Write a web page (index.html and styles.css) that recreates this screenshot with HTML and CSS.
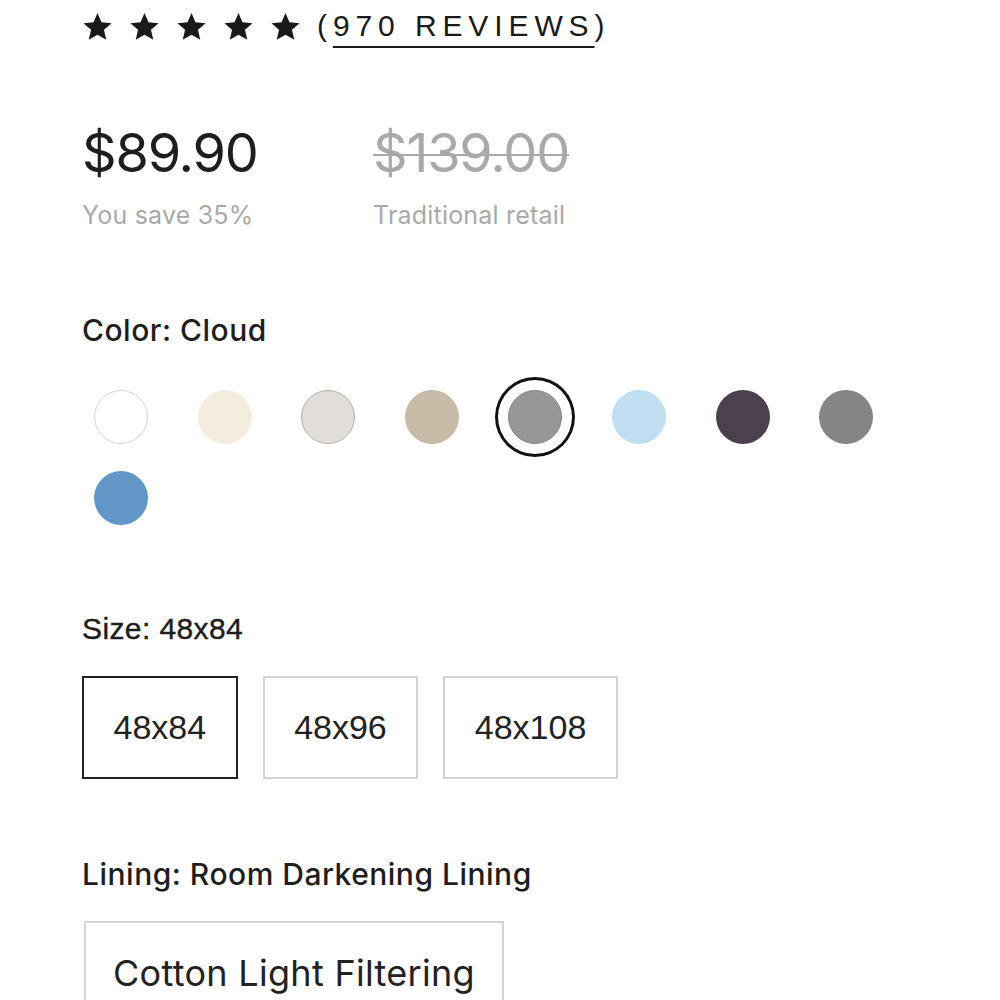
FILE: index.html
```html
<!DOCTYPE html>
<html lang="en">
<head>
<meta charset="UTF-8" />
<meta name="viewport" content="width=device-width, initial-scale=1" />
<title>Curtain Panel</title>
<link rel="stylesheet" href="styles.css">
</head>
<body>
  <div class="product" role="main">
    <div class="rating">
      <div class="stars" aria-label="5 out of 5 stars">
        <svg viewBox="0 0 24 24"><path d="M12 1.5l3.1 7.2 7.8.7-5.9 5.2 1.8 7.7L12 18.3l-6.8 4 1.8-7.7-5.9-5.2 7.8-.7z"/></svg>
        <svg viewBox="0 0 24 24"><path d="M12 1.5l3.1 7.2 7.8.7-5.9 5.2 1.8 7.7L12 18.3l-6.8 4 1.8-7.7-5.9-5.2 7.8-.7z"/></svg>
        <svg viewBox="0 0 24 24"><path d="M12 1.5l3.1 7.2 7.8.7-5.9 5.2 1.8 7.7L12 18.3l-6.8 4 1.8-7.7-5.9-5.2 7.8-.7z"/></svg>
        <svg viewBox="0 0 24 24"><path d="M12 1.5l3.1 7.2 7.8.7-5.9 5.2 1.8 7.7L12 18.3l-6.8 4 1.8-7.7-5.9-5.2 7.8-.7z"/></svg>
        <svg viewBox="0 0 24 24"><path d="M12 1.5l3.1 7.2 7.8.7-5.9 5.2 1.8 7.7L12 18.3l-6.8 4 1.8-7.7-5.9-5.2 7.8-.7z"/></svg>
      </div>
      <span class="reviews">(<a href="#reviews">970 REVIEWS</a>)</span>
    </div>

    <div class="prices">
      <div class="price">
        <div class="amount">$89.90</div>
        <div class="note">You save 35%</div>
      </div>
      <div class="price old">
        <div class="amount">$139.00</div>
        <div class="note">Traditional retail</div>
      </div>
    </div>

    <section class="option">
      <h3>Color: Cloud</h3>
      <div class="swatches">
        <button class="swatch" style="background:#ffffff;border-color:#d4d4d4" aria-label="White"></button>
        <button class="swatch" style="background:#f4eddd" aria-label="Ivory"></button>
        <button class="swatch" style="background:#e1ddd9;border-color:#b3afab" aria-label="Fog"></button>
        <button class="swatch" style="background:#c7baa7" aria-label="Sand"></button>
        <button class="swatch selected" style="background:#979795;border-color:#868684" aria-label="Cloud"></button>
        <button class="swatch" style="background:#c0ddf2" aria-label="Sky"></button>
        <button class="swatch" style="background:#4b404d" aria-label="Plum"></button>
        <button class="swatch" style="background:#858585" aria-label="Slate"></button>
        <button class="swatch" style="background:#6196c7" aria-label="Blue"></button>
      </div>
    </section>

    <section class="option size-option">
      <h3>Size: 48x84</h3>
      <div class="choices">
        <button class="choice size active">48x84</button>
        <button class="choice size">48x96</button>
        <button class="choice size">48x108</button>
      </div>
    </section>

    <section class="option lining-option">
      <h3>Lining: Room Darkening Lining</h3>
      <div class="choices">
        <button class="choice wide">Cotton Light Filtering</button>
      </div>
    </section>
  </div>
</body>
</html>
```

FILE: styles.css
```css
*, *::before, *::after {
  box-sizing: border-box;
}
body {
  margin: 0;
  background: #fff;
  color: #1e1e1e;
  font-family: 'Inter', 'Liberation Sans', Arial, sans-serif;
  font-feature-settings: "calt" 0;
}
.product {
  padding: 8px 0 0 82px;
}

/* rating */
.rating {
  display: flex;
  align-items: center;
  height: 36px;
}
.stars {
  display: flex;
  gap: 16px;
}
.stars svg {
  width: 31px;
  height: 31px;
  fill: #1a1a1a;
}
.reviews {
  margin-left: 16px;
  font-family: 'Liberation Sans', Arial, sans-serif;
  font-size: 30px;
  letter-spacing: 5.9px;
  color: #1a1a1a;
}
.reviews a {
  color: inherit;
  text-decoration: underline;
  text-decoration-thickness: 2px;
  text-underline-offset: 10px;
}

/* prices */
.prices {
  display: flex;
  margin-top: 79px;
}
.price {
  width: 291px;
}
.amount {
  font-size: 54px;
  line-height: 60px;
  letter-spacing: -1.2px;
  color: #1e1e1e;
}
.note {
  margin-top: 17px;
  font-size: 25px;
  letter-spacing: 0.2px;
  color: #a9a9a9;
}
.old .amount {
  color: #a9a9a9;
  text-decoration: line-through;
  text-decoration-thickness: 2px;
}

/* options */
.option {
  margin-top: 82px;
}
.option h3 {
  margin: 0;
  font-size: 30px;
  font-weight: 500;
  letter-spacing: 0.5px;
  color: #1e1e1e;
}
.size-option {
  margin-top: 87px;
}
.size-option h3 {
  font-family: 'Liberation Sans', Arial, sans-serif;
  font-weight: 400;
  letter-spacing: 0.4px;
  -webkit-text-stroke: 0.4px #1e1e1e;
}
.lining-option {
  margin-top: 77px;
}
.swatches {
  display: flex;
  flex-wrap: wrap;
  width: 830px;
  margin-top: 42px;
  margin-left: 12px;
  row-gap: 27px;
}
.swatch {
  width: 54px;
  height: 54px;
  margin-right: 49.6px;
  border-radius: 50%;
  border: 1.5px solid transparent;
  padding: 0;
  cursor: pointer;
}
.swatch.selected {
  box-shadow: 0 0 0 10px #fff, 0 0 0 13px #111;
}
.choices {
  display: flex;
  gap: 25px;
  margin-top: 29px;
}
.size-option .choices {
  margin-top: 30px;
}
.choice {
  height: 103px;
  padding: 0 29.5px;
  border: 2px solid #d3d3d3;
  background: #fff;
  font-family: inherit;
  color: #222;
  cursor: pointer;
}
.choice.size {
  font-family: 'Liberation Sans', Arial, sans-serif;
  font-size: 34px;
}
.choice.active {
  border-color: #222;
}
.choice.wide {
  margin-left: 2px;
  padding: 0 27px;
  font-size: 36px;
  letter-spacing: 0.3px;
}
```
